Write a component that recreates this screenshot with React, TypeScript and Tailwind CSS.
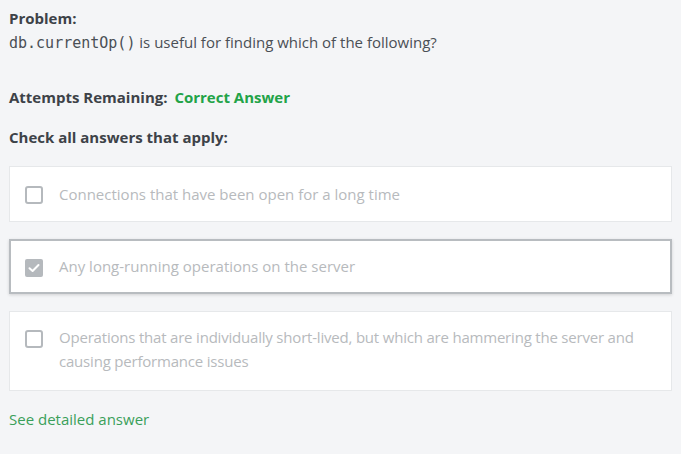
import React from "react";

function Box({ checked }: { checked?: boolean }) {
  if (checked) {
    return (
      <div className="w-[18px] h-[18px] rounded-[2px] bg-[#b5b9bd] flex items-center justify-center shrink-0 mt-[2px]">
        <svg width="12" height="10" viewBox="0 0 12 10">
          <path d="M1.5 5.2 L4.6 8 L10.5 2" fill="none" stroke="#fff" strokeWidth="2" strokeLinecap="round" strokeLinejoin="round" />
        </svg>
      </div>
    );
  }
  return <div className="w-[18px] h-[18px] rounded-[3px] border-2 border-[#b5b9bd] bg-white shrink-0 mt-[2px]" />;
}

export default function App() {
  return (
    <div className="w-[681px] h-[454px] bg-[#f4f5f7] px-[9px] pt-[8px] text-[15px]" style={{ fontFamily: "'Open Sans', sans-serif" }}>
      <div className="font-bold text-[#3d4248] leading-[20px]">Problem:</div>
      <div className="text-[#4a4f55] leading-[20px] mt-[4px]">
        <span className="text-[15px]" style={{ fontFamily: "'DejaVu Sans Mono', monospace" }}>db.currentOp()</span> is useful for finding which of the following?
      </div>
      <div className="font-bold text-[#3d4248] leading-[20px] mt-[34px]">
        Attempts Remaining: <span className="text-[#22a348] ml-[3px]">Correct Answer</span>
      </div>
      <div className="font-bold text-[#3d4248] leading-[20px] mt-[20px]">Check all answers that apply:</div>
      <div className="mt-[19px] flex flex-col gap-[17px] w-[663px]">
        <div className="bg-white border border-[#e6e8ea] h-[56px] px-[15px] flex items-center gap-[16px]">
          <Box />
          <span className="text-[#b7babd]">Connections that have been open for a long time</span>
        </div>
        <div className="bg-white border-2 border-[#b8bcc0] h-[55px] px-[14px] flex items-center gap-[16px] shadow-[0_1px_3px_rgba(0,0,0,0.15)]">
          <Box checked />
          <span className="text-[#b7babd]">Any long-running operations on the server</span>
        </div>
        <div className="bg-white border border-[#e6e8ea] h-[80px] px-[15px] pt-[16px] flex items-start gap-[16px]">
          <Box />
          <span className="text-[#b7babd] leading-[24px] -mt-[3px] tracking-[-0.2px]">Operations that are individually short-lived, but which are hammering the server and causing performance issues</span>
        </div>
      </div>
      <div className="mt-[18px] text-[#3a9f5a] leading-[20px]">See detailed answer</div>
    </div>
  );
}
